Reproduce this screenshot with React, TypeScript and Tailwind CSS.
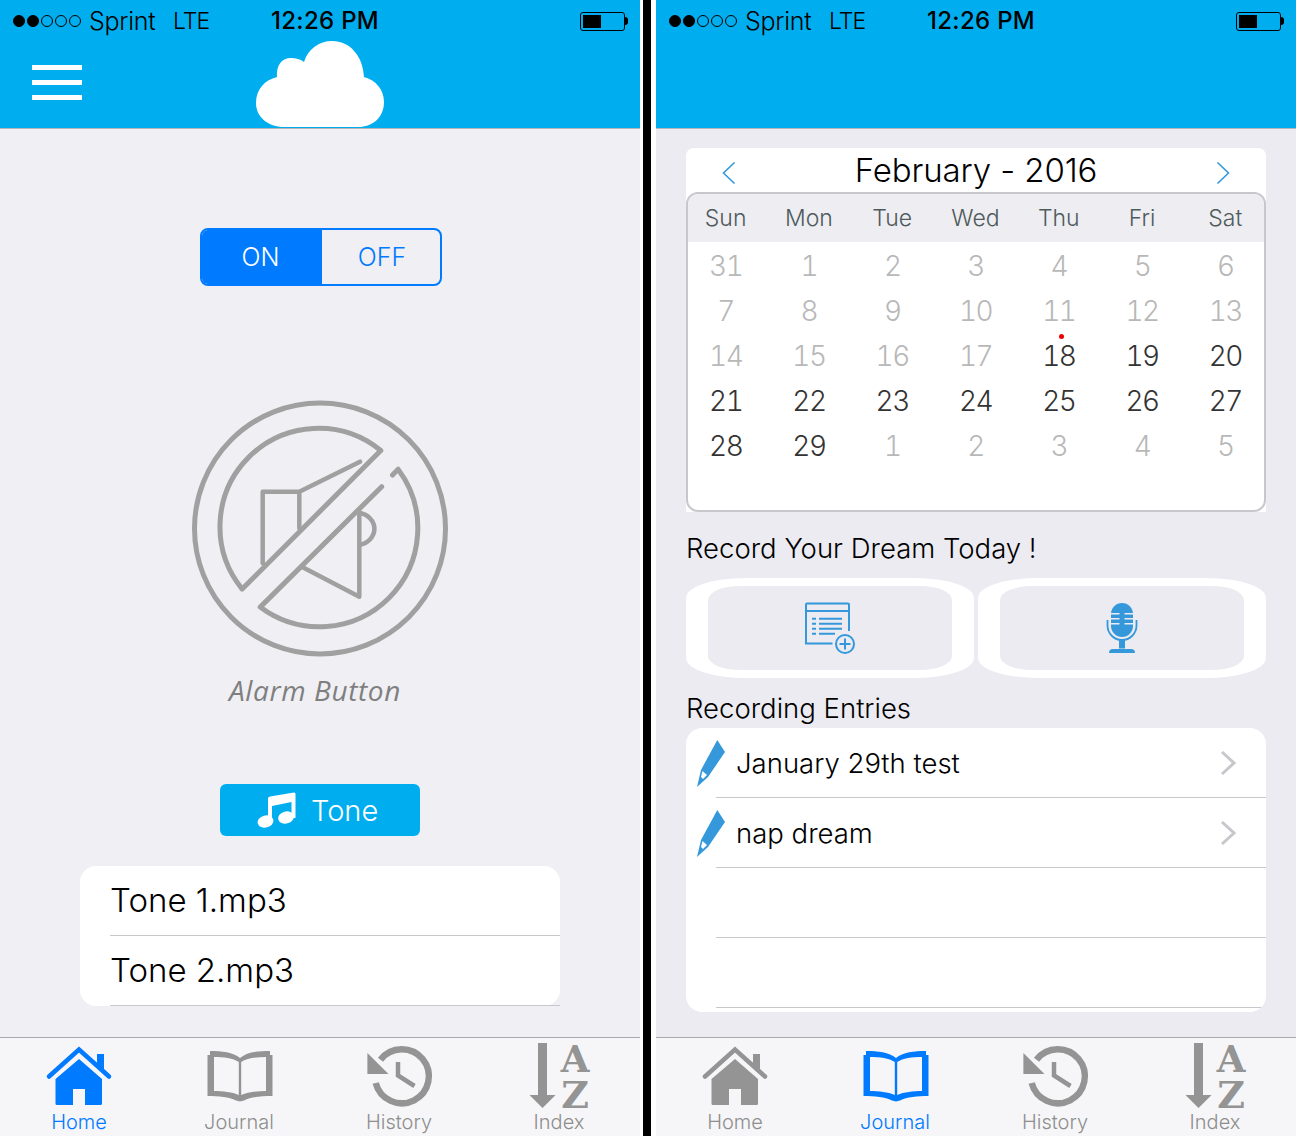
const FONT = "font-['Inter','Liberation_Sans',sans-serif]";

function StatusBar() {
  return (
    <div className="flex h-10 items-center pt-[2px] text-[25px] leading-none text-black">
      <div className="ml-[13px] flex w-[68px] gap-[2px]">
        {[true, true, false, false, false].map((on, i) => (
          <span key={i} className={`h-[12px] w-[12px] rounded-full border border-black ${on ? 'bg-black' : ''}`} />
        ))}
      </div>
      <span className="ml-[8px] w-[84px] font-light tracking-[-0.3px]">Sprint</span>
      <span className="w-[98px] text-[23px] font-light tracking-[-1px]">LTE</span>
      <span className="text-[24px] font-medium tracking-[0.3px]">12:26 PM</span>
      <div className="ml-auto mr-[12px] flex items-center">
        <div className="flex h-[19px] w-[45px] rounded-[3px] border border-black p-[2px]">
          <div className="w-[18px] bg-black" />
        </div>
        <div className="h-[8px] w-[3px] rounded-r-full bg-black" />
      </div>
    </div>
  );
}

function Cloud() {
  return (
    <svg width="128" height="86" viewBox="0 0 128 86" className="mx-auto mt-px block">
      <path
        fill="#fff"
        d="M28 86C12 86 0 76 0 62C0 48 9 39 21 36C20 24 26 17 35 17C40 17 44 18 48 21C52 8 63 0 76 0C94 0 107 15 108 36C120 39 128 49 128 61C128 76 117 86 102 86Z"
      />
    </svg>
  );
}

function HomeIcon({ color }: { color: string }) {
  return (
    <svg width="70" height="68" viewBox="1 0 70 68" fill="none">
      <path d="M53 12H60V27H53Z" fill={color} />
      <path d="M5 34.500L35 7.500L65 34.500" stroke={color} strokeWidth="4.500" strokeLinecap="round" />
      <path d="M35 17L58 37V61.500Q58 63 56.500 63H41V47H29V63H13Q11.500 63 11.500 61.500V37Z" fill={color} />
    </svg>
  );
}

function JournalIcon({ color }: { color: string }) {
  return (
    <svg width="70" height="68" viewBox="0 0 70 68">
      <path
        fill={color}
        fillRule="evenodd"
        d="M5 9C17 9 28 10 35 16C42 10 53 9 65 9V13H67.500V54C56 54 46 55 39 58.500L35 59.500L31 58.500C24 55 14 54 2.500 54V13H5ZM9 15V49C18 49 27 50 33.800 53V20C28 16 19 15 9 15ZM61 15C51 15 42 16 36.200 20V53C43 50 52 49 61 49Z"
      />
    </svg>
  );
}

function HistoryIcon({ color }: { color: string }) {
  return (
    <svg width="70" height="68" viewBox="0 0 70 68" fill="none">
      <path d="M15.500 17.700A27 27 0 1 1 10.700 41" stroke={color} strokeWidth="6.500" />
      <path d="M2.400 11V32H23.500Z" fill={color} />
      <path d="M33 20V33.500L49.500 44" stroke={color} strokeWidth="4.500" />
    </svg>
  );
}

function IndexIcon({ color }: { color: string }) {
  return (
    <svg width="70" height="68" viewBox="0 0 70 68" className="overflow-visible">
      <path d="M13 1H22V53H30.600L17.500 66L4.500 53H13Z" fill={color} />
      <text x="50" y="30" textAnchor="middle" fontFamily="DejaVu Serif" fontWeight="700" fontSize="37" fill={color}>
        A
      </text>
      <text x="50" y="66" textAnchor="middle" fontFamily="DejaVu Serif" fontWeight="700" fontSize="38" fill={color}>
        Z
      </text>
    </svg>
  );
}

const tabs = [
  { label: 'Home', Icon: HomeIcon },
  { label: 'Journal', Icon: JournalIcon },
  { label: 'History', Icon: HistoryIcon },
  { label: 'Index', Icon: IndexIcon },
];

function TabBar({ active }: { active: string }) {
  return (
    <div className="grid h-[99px] grid-cols-4 border-t border-[#a9a9ad] bg-[#f6f6f8] pt-1">
      {tabs.map(({ label, Icon }) => {
        const isActive = label === active;
        return (
          <div key={label} className="flex flex-col items-center">
            <Icon color={isActive ? '#007aff' : '#949494'} />
            <span className={`pr-[2px] text-[20px] font-light leading-[24px] ${isActive ? 'text-[#007aff]' : 'text-[#8e8e8e]'}`}>
              {label}
            </span>
          </div>
        );
      })}
    </div>
  );
}

function AlarmIcon() {
  return (
    <svg width="260" height="260" viewBox="0 0 260 260" fill="none" stroke="#a0a0a0" strokeWidth="5" strokeLinejoin="round" strokeLinecap="round">
      <circle cx="130" cy="129.500" r="125.500" />
      <path d="M190.800 51.500A98.500 98.500 0 0 0 52.200 190.100Z" />
      <path d="M191.700 87.700L70.200 208.100A98.500 98.500 0 0 0 208.100 70.200L202.500 76" />
      <g strokeWidth="4.500">
        <path d="M72.700 164.300V92.700H109.300V129.300M109.300 92.700L170 62.700" />
        <path d="M169.300 112.700V197.700L112.700 168.300M169.300 113.700A19 16.500 0 0 1 169.300 146" />
      </g>
    </svg>
  );
}

function MusicIcon() {
  return (
    <svg width="40" height="36" viewBox="0 0 40 36" fill="#fff">
      <ellipse cx="8.500" cy="29.500" rx="8" ry="6" transform="rotate(-15 8.500 29.500)" />
      <ellipse cx="29" cy="25.500" rx="8" ry="6" transform="rotate(-15 29 25.500)" />
      <path d="M11 6Q11 5 13 4.500L37 0.500Q38.500 0.500 38.500 2V26H34.500V10L15 14V30H11Z" />
    </svg>
  );
}

function HomeScreen() {
  return (
    <div className="flex w-[640px] flex-col">
      <div className="h-[129px] border-b border-[#b5b5b8] bg-[#00aeef]">
        <StatusBar />
        <div className="relative">
          <div className="absolute left-[32px] top-[24px] flex w-[50px] flex-col gap-[10px]">
            <div className="h-[5px] bg-white" />
            <div className="h-[5px] bg-white" />
            <div className="h-[5px] bg-white" />
          </div>
          <Cloud />
        </div>
      </div>
      <div className="flex flex-1 flex-col items-center bg-[#efeff4]">
        <div className="ml-[2px] mt-[99px] flex h-[58px] w-[242px] overflow-hidden rounded-lg border-2 border-[#007aff] text-[25px] font-light">
          <div className="flex w-[120px] items-center justify-center bg-[#007aff] pr-[3px] pt-[2px] text-white">ON</div>
          <div className="flex flex-1 items-center justify-center pl-[2px] pt-[2px] text-[#007aff]">OFF</div>
        </div>
        <div className="mt-[113px]">
          <AlarmIcon />
        </div>
        <div className="mr-[10px] mt-[11px] font-['Open_Sans',sans-serif] text-[28px] italic leading-[40px] tracking-[0.6px] text-[#7f7f7f]">
          Alarm Button
        </div>
        <div className="mt-[74px] flex h-[52px] w-[200px] items-center rounded-md bg-[#00aeef] pl-[37px] text-white">
          <MusicIcon />
          <span className="ml-[14px] pt-[2px] text-[29px] font-light">Tone</span>
        </div>
        <div className="mt-[30px] w-[480px] rounded-2xl bg-white pl-[30px] text-[33px] font-[350] text-black">
          <div className="flex h-[70px] items-center border-b border-[#c8c8cc]">Tone 1.mp3</div>
          <div className="flex h-[70px] items-center border-b border-[#c8c8cc]">Tone 2.mp3</div>
        </div>
      </div>
      <TabBar active="Home" />
    </div>
  );
}

const weekdays = ['Sun', 'Mon', 'Tue', 'Wed', 'Thu', 'Fri', 'Sat'];
const days: [number, boolean][] = [
  ...[31, 1, 2, 3, 4, 5, 6, 7, 8, 9, 10, 11, 12, 13, 14, 15, 16, 17].map((d): [number, boolean] => [d, false]),
  ...Array.from({ length: 12 }, (_, i): [number, boolean] => [18 + i, true]),
  ...[1, 2, 3, 4, 5].map((d): [number, boolean] => [d, false]),
];

function Chevron({ flip }: { flip?: boolean }) {
  return (
    <svg width="14" height="24" viewBox="0 0 14 24" fill="none" stroke="#3498db" strokeWidth="1.600" className={`mt-[5px] ${flip ? 'rotate-180' : ''}`}>
      <path d="M12.500 1.500L1.500 12L12.500 22.500" />
    </svg>
  );
}

function Calendar() {
  return (
    <div className="w-[580px]">
      <div className="flex h-[44px] items-center justify-between rounded-t-lg bg-white px-[36px] text-black">
        <Chevron />
        <span className="pt-[2px] text-[33px] font-[350] tracking-[-0.1px]">February - 2016</span>
        <Chevron flip />
      </div>
      <div className="bg-white">
        <div className="h-[320px] overflow-hidden rounded-xl border-2 border-[#c8c8cc]">
          <div className="-ml-[4px] -mr-[3px] grid h-[48px] grid-cols-7 items-center bg-[#ededf2] text-center text-[23px] font-[350] text-[#4f5a5c]">
            {weekdays.map((d) => (
              <span key={d}>{d}</span>
            ))}
          </div>
          <div className="-ml-[4px] -mr-[3px] grid grid-cols-7 pt-px text-center text-[28px] font-[350] tabular-nums tracking-[-1.5px]">
            {days.map(([d, current], i) => (
              <div key={i} className={`relative flex h-[45px] items-center justify-center ${current ? 'text-[#333]' : 'text-[#b8b8b8]'}`}>
                {d}
                {d === 18 && <span className="absolute left-1/2 top-[1px] h-[5px] w-[5px] rounded-full bg-[#f00000]" />}
              </div>
            ))}
          </div>
        </div>
      </div>
    </div>
  );
}

function NoteAddIcon() {
  return (
    <svg width="54" height="52" viewBox="0 0 54 52" fill="none" stroke="#3498db" strokeWidth="2" className="ml-[2px]">
      <path d="M28.500 41.500H2V2.500Q2 1.500 3 1.500H44Q45 1.500 45 2.500V29M2 9H45" />
      <path d="M8 16.700H12M15 16.700H38M8 21.700H12M15 21.700H38M8 26.700H12M15 26.700H38M8 31.700H12M15 31.700H31" />
      <circle cx="41" cy="42" r="9" />
      <path d="M41 36.500V47.500M35.500 42H46.500" />
    </svg>
  );
}

function MicIcon() {
  return (
    <svg width="34" height="52" viewBox="0 0 34 52" fill="none">
      <rect x="6" y="1" width="22" height="34" rx="11" fill="#3498db" />
      <path d="M6 11.700H14.500M19.500 11.700H28M6 16.700H14.500M19.500 16.700H28M6 21.700H14.500M19.500 21.700H28" stroke="#ebebf1" strokeWidth="1.500" />
      <path d="M2.500 18V23.500A14.500 14.500 0 0 0 31.500 23.500V18" stroke="#3498db" strokeWidth="1.800" />
      <path d="M14 37H20V46.500H14Z" fill="#3498db" />
      <path d="M4 51Q4 47 8 47H26Q30 47 30 51Z" fill="#3498db" />
    </svg>
  );
}

function RecordButton({ children }: { children: React.ReactNode }) {
  return (
    <div className="flex h-[100px] w-[288px] items-center justify-center rounded-[60px/20px] bg-white">
      <div className="flex h-[84px] w-[244px] items-center justify-center rounded-[32px/14px] bg-[#ebebf1]">{children}</div>
    </div>
  );
}

function PencilIcon() {
  return (
    <svg width="30" height="50" viewBox="0 0 30 50" className="shrink-0">
      <path d="M21.300 2L29 14L12 39L1 49L5 32Z" fill="#3498db" />
      <path d="M6.500 33L11 37L7 41L5 39Z" fill="#fff" />
    </svg>
  );
}

function EntryRow({ title }: { title?: string }) {
  return (
    <div className="flex h-[70px] items-center pl-[10px]">
      <div className="w-[20px] shrink-0">{title && <PencilIcon />}</div>
      <div className="flex h-full flex-1 items-center border-b border-[#c8c8cc] pr-[30px] text-[27.5px] font-[350] text-black">
        {title && (
          <>
            <span className="ml-[20px] pt-[2px]">{title}</span>
            <svg width="16" height="26" viewBox="0 0 16 26" fill="none" stroke="#c7c7cc" strokeWidth="3" className="ml-auto">
              <path d="M2 2L14 13L2 24" />
            </svg>
          </>
        )}
      </div>
    </div>
  );
}

function JournalScreen() {
  return (
    <div className="flex w-[640px] flex-col">
      <div className="h-[129px] border-b border-[#b5b5b8] bg-[#00aeef]">
        <StatusBar />
      </div>
      <div className="flex flex-1 flex-col items-center bg-[#ebebf1] pt-[19px]">
        <Calendar />
        <div className="w-[580px]">
          <div className="mt-[18px] text-[27.5px] font-[350] leading-[36px] text-black">Record Your Dream Today !</div>
          <div className="mt-[12px] flex justify-between">
            <RecordButton>
              <NoteAddIcon />
            </RecordButton>
            <RecordButton>
              <MicIcon />
            </RecordButton>
          </div>
          <div className="mt-[12px] text-[27.5px] font-[350] leading-[36px] text-black">Recording Entries</div>
          <div className="mt-[2px] h-[284px] overflow-hidden rounded-2xl bg-white">
            <EntryRow title="January 29th test" />
            <EntryRow title="nap dream" />
            <EntryRow />
            <EntryRow />
          </div>
        </div>
      </div>
      <TabBar active="Journal" />
    </div>
  );
}

export default function App() {
  return (
    <div className={`flex h-[1136px] w-[1298px] bg-white ${FONT}`}>
      <HomeScreen />
      <div className="ml-[3px] w-[8px] bg-black" />
      <div className="ml-[5px]">
        <div className="flex h-full">
          <JournalScreen />
        </div>
      </div>
    </div>
  );
}
